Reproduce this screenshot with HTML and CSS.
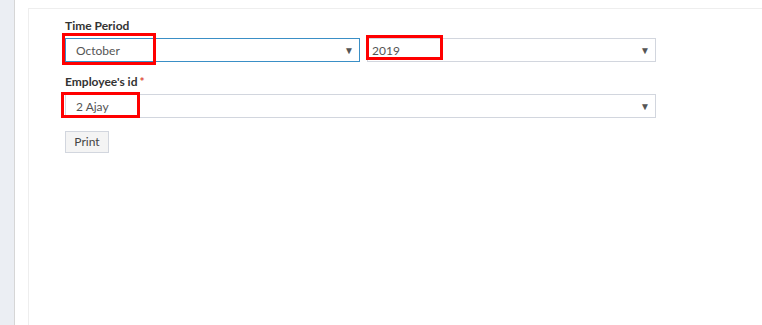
FILE: index.html
```html
<!DOCTYPE html>
<html lang="en">
<head>
  <meta charset="UTF-8" />
  <title>Salary Slip</title>
  <link rel="stylesheet" href="styles.css">
</head>
<body>
  <div class="layout">
    <aside class="sidebar"></aside>
    <main class="panel">
      <form class="report-form">
        <label class="field-label">Time Period</label>
        <div class="row">
          <div class="select month focused">
            <span class="value">October</span>
            <span class="arrow">▼</span>
            <span class="mark mark-month"></span>
          </div>
          <div class="select year">
            <span class="value">2019</span>
            <span class="arrow">▼</span>
            <span class="mark mark-year"></span>
          </div>
        </div>

        <label class="field-label">Employee's id<span class="req">*</span></label>
        <div class="row">
          <div class="select employee">
            <span class="value">2 Ajay</span>
            <span class="arrow">▼</span>
            <span class="mark mark-employee"></span>
          </div>
        </div>

        <button type="button" class="btn-print">Print</button>
      </form>
    </main>
  </div>
</body>
</html>
```

FILE: styles.css
```css
body {
  margin: 0;
  padding: 0;
  background: #fff;
  font-family: "Lato", "Liberation Sans", sans-serif;
  color: #333;
}
.layout {
  display: flex;
  height: 325px;
}
.sidebar {
  width: 14px;
  background: #ebeef3;
  border-right: 1px solid #d6d6d6;
}
.panel {
  flex: 1;
  margin: 8px 0 0 13px;
  border-left: 1px solid #eeeeee;
  border-top: 1px solid #eeeeee;
  background: #fff;
}
.report-form {
  padding: 9px 0 0 36px;
  width: 591px;
}
.field-label {
  display: block;
  font-size: 12px;
  font-weight: bold;
  color: #333;
  line-height: 15px;
  margin-bottom: 5px;
}
.req {
  color: #dd4b39;
  font-size: 12px;
  margin-left: 2px;
}
.row {
  display: flex;
  gap: 7px;
  margin-bottom: 12px;
}
.select {
  position: relative;
  height: 22px;
  border: 1px solid #d2d6de;
  display: flex;
  align-items: center;
  font-size: 12px;
  color: #555;
  background: #fff;
}
.select.focused {
  border-color: #3a8fc6;
}
.select .value {
  padding-left: 10px;
  flex: 1;
}
.select.year .value {
  padding-left: 4px;
}
.select .arrow {
  font-size: 10px;
  color: #555;
  padding-right: 5px;
}
.month {
  width: 293px;
}
.year {
  width: 287px;
}
.employee {
  width: 589px;
}
.mark {
  position: absolute;
  border: 3px solid #f00;
  box-sizing: border-box;
}
.mark-month {
  left: -4px;
  top: -6px;
  width: 94px;
  height: 32px;
}
.mark-year {
  left: -2px;
  top: -4px;
  width: 77px;
  height: 25px;
}
.mark-employee {
  left: -5px;
  top: -3px;
  width: 79px;
  height: 26px;
}
.btn-print {
  margin-top: 0;
  width: 44px;
  height: 22px;
  padding: 0;
  background: #f4f4f4;
  border: 1px solid #d2d6de;
  font-family: "Lato", "Liberation Sans", sans-serif;
  font-size: 12px;
  color: #444;
}
```
